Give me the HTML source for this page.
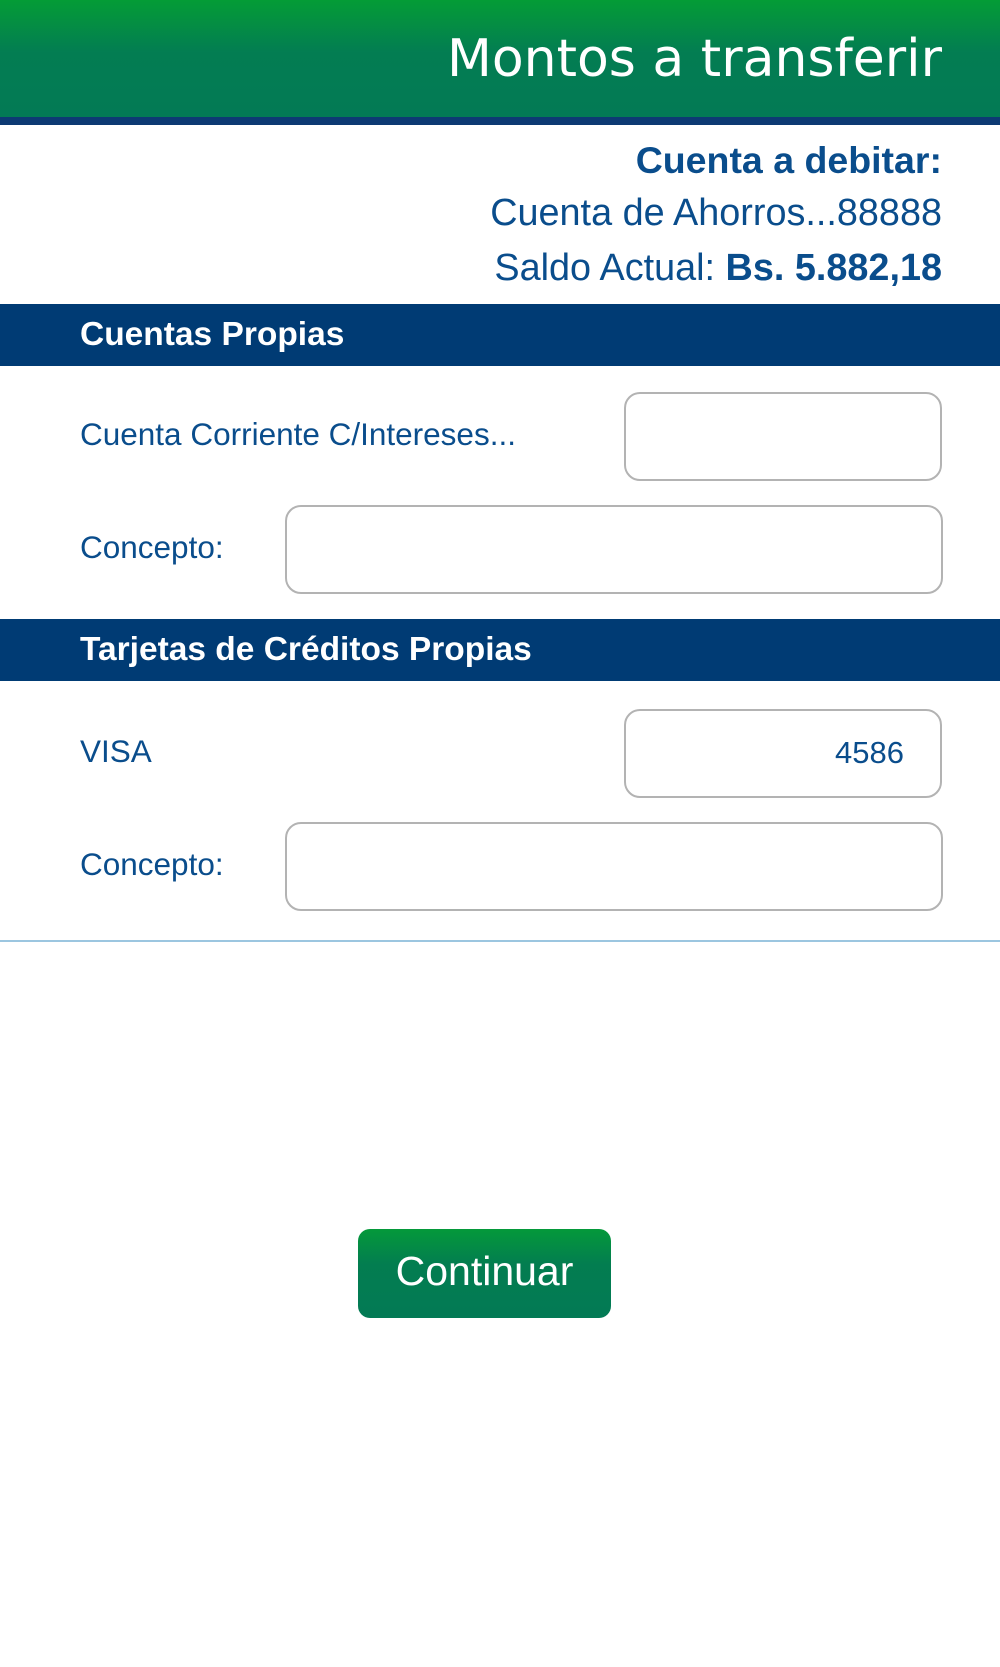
<!DOCTYPE html>
<html><head><meta charset="utf-8"><style>
*{margin:0;padding:0;box-sizing:border-box}
body{width:1000px;height:1667px;background:#fff;position:relative;font-family:"Liberation Sans",Arial,sans-serif;color:#0a4d8c;overflow:hidden}
.hdr{position:absolute;left:0;top:0;width:1000px;height:117px;background:linear-gradient(#049c36 0%,#037d52 45%,#037a55 100%)}
.hdr h1{position:absolute;right:58px;top:29px;font-family:"DejaVu Sans",sans-serif;font-weight:normal;font-size:52px;color:#fff;letter-spacing:0px}
.stripe{position:absolute;left:0;top:117px;width:1000px;height:8px;background:#0d3a73}
.r{position:absolute;right:58px;text-align:right;white-space:nowrap}
.bar{position:absolute;left:0;width:1000px;height:62px;background:#003b74;color:#fff;font-weight:bold;font-size:33.5px;padding-left:80px;line-height:62px}
.lbl{position:absolute;left:80px;font-size:31.5px;line-height:36px}
.in{position:absolute;border:2px solid #b3b3b3;border-radius:16px;background:#fff}
.btn{position:absolute;left:358px;top:1229px;width:253px;height:89px;border-radius:12px;background:linear-gradient(#04993a 0%,#037d50 40%,#037a55 100%);color:#fff;font-size:41px;text-align:center;line-height:84px}
</style></head><body>
<div class="hdr"><h1>Montos a transferir</h1></div>
<div class="stripe"></div>
<div class="r" style="top:139px;font-size:37.5px;font-weight:bold">Cuenta a debitar:</div>
<div class="r" style="top:192px;font-size:37.8px">Cuenta de Ahorros...88888</div>
<div class="r" style="top:247px;font-size:37.8px">Saldo Actual: <b>Bs. 5.882,18</b></div>
<div class="bar" style="top:304px">Cuentas Propias</div>
<div class="lbl" style="top:416px">Cuenta Corriente C/Intereses...</div>
<div class="in" style="left:624px;top:392px;width:318px;height:89px"></div>
<div class="lbl" style="top:529px">Concepto:</div>
<div class="in" style="left:285px;top:505px;width:658px;height:89px"></div>
<div class="bar" style="top:619px">Tarjetas de Créditos Propias</div>
<div class="lbl" style="top:733px">VISA</div>
<div class="in" style="left:624px;top:709px;width:318px;height:89px"><span style="position:absolute;right:36px;top:24px;font-size:31px">4586</span></div>
<div class="lbl" style="top:846px">Concepto:</div>
<div class="in" style="left:285px;top:822px;width:658px;height:89px"></div>
<div style="position:absolute;left:0;top:940px;width:1000px;height:2px;background:#9cc6e0"></div>
<div class="btn">Continuar</div>
</body></html>
